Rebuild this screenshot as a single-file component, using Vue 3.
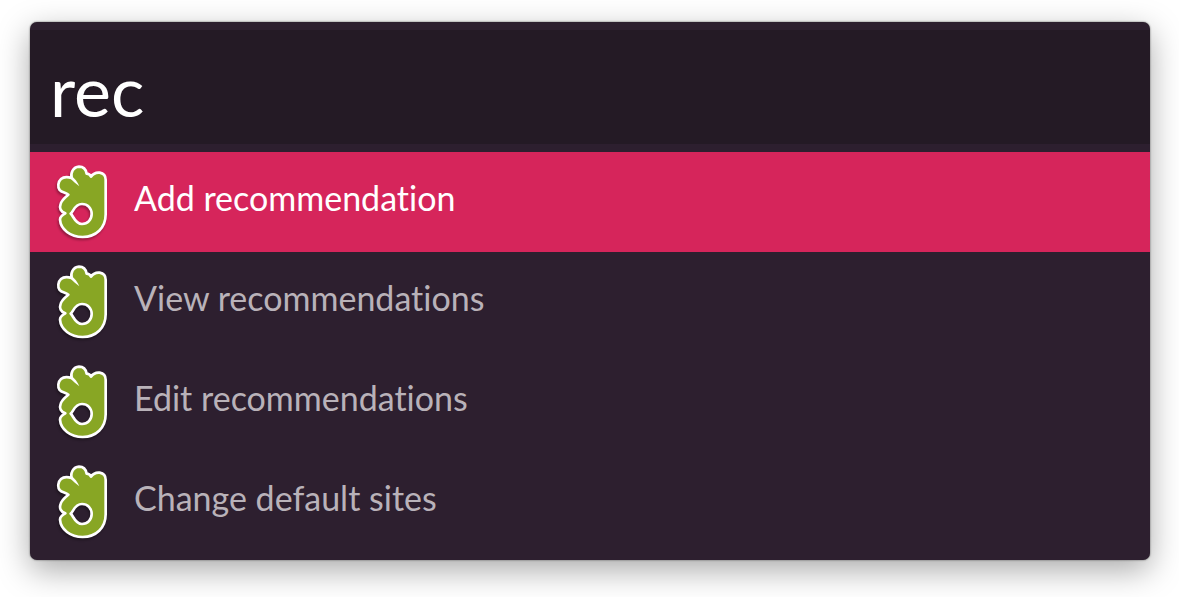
<script setup>
import { ref } from "vue";

const query = ref("rec");
const selected = ref(0);

const results = [
  "Add recommendation",
  "View recommendations",
  "Edit recommendations",
  "Change default sites",
];
</script>

<template>
  <main class="launcher">
    <div class="search">
      <input v-model="query" type="text" aria-label="Search" spellcheck="false" autocomplete="off" />
    </div>
    <ul class="results">
      <li v-for="(label, index) in results" :key="label">
        <button
          type="button"
          class="result"
          :class="{ 'is-selected': index === selected }"
          @click="selected = index"
        >
          <svg class="icon" viewBox="12 21 168 240" aria-hidden="true">
            <path
              class="hand"
              fill-rule="evenodd"
              d="M123 65 C130 55 140 52 149 53 C160 55 167 62 167 74 V178 C167 219 138 246 98 246 C61 246 32 223 30 194 C30 184 36 180 46 175 C32 171 27 159 32 146 C36 134 44 128 55 119 C47 112 35 113 29 105 C22 97 24 80 33 72 C42 64 53 65 65 69 C61 54 69 36 87 35 C102 35 108 45 110 56 C115 56 120 59 123 65 Z M62 176 C70 171 73 147 96 147 C113 147 125 160 125 177 C125 194 113 207 96 207 C75 207 70 182 62 176 Z"
            />
            <path class="slit" d="M60 70 L65 62 C73 70 83 80 88 94 C78 87 69 79 60 70 Z" />
          </svg>
          <span class="label">{{ label }}</span>
        </button>
      </li>
    </ul>
  </main>
</template>

<style>
body {
  margin: 0;
  background: #fff;
}
</style>

<style scoped>
.launcher {
  margin: 22px 29px 37px 30px;
  padding: 8px 0;
  overflow: hidden;
  border-radius: 7px;
  background: #2d1f2f;
  box-shadow:
    0 0 2px rgba(0, 0, 0, 0.6),
    0 10px 32px rgba(0, 0, 0, 0.34);
  font-family: "Avenir Next", Avenir, Lato, sans-serif;
  font-variant-ligatures: none;
}

.search {
  margin-bottom: 8px;
  padding: 20px 20px 14px;
  background: #241a25;
}

.search input {
  display: block;
  box-sizing: border-box;
  width: 100%;
  height: 80px;
  padding: 0;
  border: 0;
  outline: 0;
  background: transparent;
  color: #fff;
  font: inherit;
  font-size: 70px;
}

.results {
  margin: 0;
  padding: 0;
  list-style: none;
}

.result {
  display: flex;
  gap: 24px;
  align-items: center;
  width: 100%;
  padding: 10px 24px;
  border: 0;
  background: transparent;
  color: #b9b2b9;
  font: inherit;
  font-size: 34px;
  line-height: 40px;
  text-align: left;
}

.result.is-selected {
  background: #d6255b;
  color: #fff;
}

.icon {
  flex: 0 0 auto;
  width: 56px;
  height: 80px;
  filter: drop-shadow(-1px 2px 1px rgba(0, 0, 0, 0.3));
}

.hand {
  fill: #88a624;
  stroke: #fff;
  stroke-width: 8;
  stroke-linejoin: round;
}

.slit {
  fill: #fff;
}

.label {
  min-width: 0;
  padding-bottom: 8px;
}
</style>
